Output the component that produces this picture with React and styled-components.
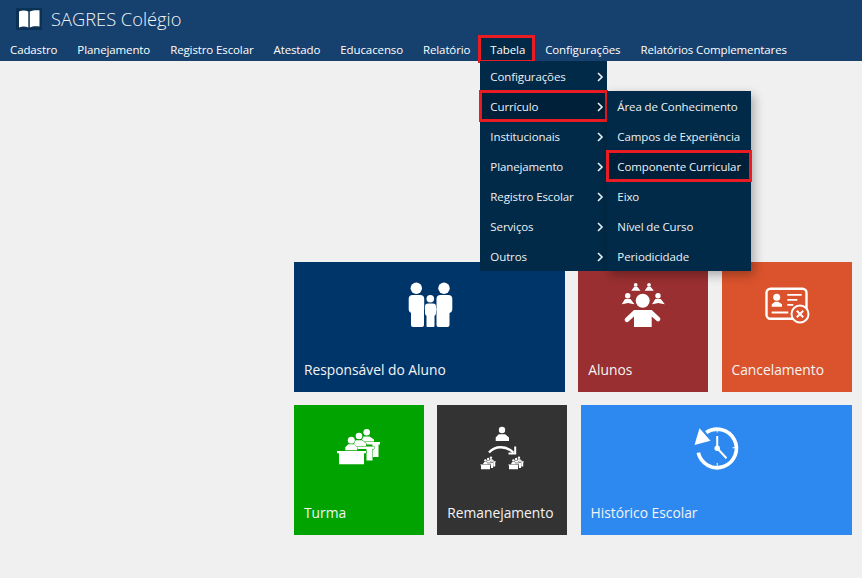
import styled, { createGlobalStyle } from "styled-components";

const GlobalStyle = createGlobalStyle`
  html, body { margin: 0; padding: 0; background: #f0f0f0; }
  body { font-family: "Open Sans", "Noto Sans", sans-serif; }
`;

const navItems = ["Cadastro", "Planejamento", "Registro Escolar", "Atestado", "Educacenso", "Relatório", "Tabela", "Configurações", "Relatórios Complementares"];
const tabelaItems = ["Configurações", "Currículo", "Institucionais", "Planejamento", "Registro Escolar", "Serviços", "Outros"];
const curriculoItems = ["Área de Conhecimento", "Campos de Experiência", "Componente Curricular", "Eixo", "Nível de Curso", "Periodicidade"];

const Chevron = () => (
  <ChevronIcon viewBox="0 0 8 10">
    <path d="M2 1l4 4-4 4" fill="none" stroke="currentColor" strokeWidth="1.6" />
  </ChevronIcon>
);

const BookLogo = () => (
  <LogoBox>
    <svg width="26" height="22" viewBox="0 0 26 22">
      <path d="M3 3.500C6 2 9.500 2 12.300 3.500V19.500C9.500 18 6 18 3 19.500Z" fill="#fff" />
      <path d="M23.500 2.300C20 2 16.500 2.300 13.800 3.500V19.500C16.500 18 20 18 23.500 18.500Z" fill="#fff" />
    </svg>
  </LogoBox>
);

const FamilyIcon = () => (
  <svg width="60" height="60" viewBox="0 0 60 60" fill="#fff">
    <circle cx="16.300" cy="11.300" r="5.700" />
    <circle cx="44" cy="11.300" r="5.700" />
    <circle cx="30.300" cy="21.700" r="3.800" />
    <rect x="8.700" y="18" width="15.500" height="18" rx="4" />
    <rect x="11" y="30" width="13" height="20" rx="2" />
    <rect x="36.500" y="18" width="15.800" height="18" rx="4" />
    <rect x="36.500" y="30" width="13" height="20" rx="2" />
    <rect x="25" y="26.500" width="11" height="12.500" rx="3" />
    <rect x="26.500" y="34" width="8" height="16" rx="1" />
  </svg>
);

const StudentsIcon = () => (
  <svg width="60" height="60" viewBox="0 0 60 60" fill="#fff">
    <circle cx="29.700" cy="23.700" r="7" />
    <path d="M21 33h17.700l8 7.500a2.300 2.300 0 0 1-3.200 3.300L38.700 39.500V50H21V39.500l-5.500 5a2.300 2.300 0 0 1-3.200-3.300Z" />
    <circle cx="14.700" cy="18.700" r="2.700" />
    <path d="M12 22h5.500l4 5.300-3-.5-3.500-.8-3.300.8-3 .5Z" />
    <circle cx="45" cy="18.700" r="2.700" />
    <path d="M42.300 22h5.500l4 5.300-3-.5-3.500-.8-3.300.8-3 .5Z" />
    <circle cx="22.700" cy="7.900" r="1.900" />
    <path d="M21 10h3.500l3 3.700h-9.200Z" />
    <circle cx="36" cy="7.900" r="1.900" />
    <path d="M34.300 10h3.500l3 3.700h-9.200Z" />
  </svg>
);

const CancelIcon = ({ color }) => (
  <svg width="60" height="60" viewBox="0 0 60 60" fill="#fff">
    <rect x="9.500" y="11.800" width="40" height="30" rx="4" fill="none" stroke="#fff" strokeWidth="2.400" />
    <circle cx="19.700" cy="20.300" r="3.500" />
    <path d="M14.700 29.700v-2.500l3.500-2.400h3l3.800 2.400v2.500Z" />
    <path d="M30.300 17h14.400v1.800H30.300ZM30.300 22h10v1.800h-10ZM30.300 27h6v1.800h-6ZM14.700 34.600h16.600v1.800H14.700Z" />
    <circle cx="43" cy="37" r="8.500" fill={color} stroke="#fff" strokeWidth="2" />
    <path d="M39.800 33.800l6.400 6.400M46.200 33.800l-6.400 6.400" stroke="#fff" strokeWidth="2" />
  </svg>
);

// three pupils behind their desks, back row first so each front desk cuts into the next
const Desks = ({ color }) => (
  <g fill="#fff" stroke={color} strokeWidth="1" paintOrder="stroke">
    <circle cx="37.700" cy="12.300" r="3.300" />
    <path d="M32 22l2.500-5.500h6l4.500 3v2.500Z" />
    <path d="M36 22h15v2.600h-1.500v12.400h-6V24.600H36Z" />
    <circle cx="30" cy="16" r="3.300" />
    <path d="M24 26l2.500-5.800h6.500l4 3V26Z" />
    <path d="M28 26.500h17v2.600h-1.500v11.400h-6V29.100H28Z" />
    <circle cx="22.300" cy="20.300" r="3.500" />
    <path d="M16.300 30.500v-3.200l3-3h6l3 3v3.200Z" />
    <path d="M8 31h29v2.300h-2V44.300H10V33.300H8Z" />
  </g>
);

const TurmaIcon = ({ color }) => (
  <svg width="60" height="60" viewBox="0 0 60 60">
    <Desks color={color} />
  </svg>
);

const MoveIcon = ({ color }) => (
  <svg width="60" height="60" viewBox="0 0 60 60" fill="#fff">
    <circle cx="30" cy="10" r="3.200" />
    <path d="M23.700 21v-3.500l3-3.200h6.500l3.800 3.200V21Z" />
    <path d="M17 32.500C23 25.500 34 25.500 41.500 32.500" fill="none" stroke="#fff" strokeWidth="2.300" />
    <path d="M36.500 33.500h6.700v-7" fill="none" stroke="#fff" strokeWidth="2" />
    <g transform="translate(5.400 33.300) scale(.36)"><Desks color={color} /></g>
    <g transform="translate(33.400 33.300) scale(.36)"><Desks color={color} /></g>
  </svg>
);

const HistoryIcon = () => (
  <svg width="60" height="60" viewBox="0 0 60 60" fill="#fff">
    <path d="M20.200 12.500A19.300 19.300 0 1 1 12.300 32.700" fill="none" stroke="#fff" strokeWidth="3.700" />
    <path d="M13.500 8.300 8.500 25 24.500 20.700Z" />
    <path d="M31.200 16v12.300l9.300 10" fill="none" stroke="#fff" strokeWidth="2" />
    <circle cx="31.200" cy="28.300" r="2.700" />
    <path d="M30.700 9.500h1v3h-1ZM30.700 43h1v3h-1ZM46.500 27.200h3v1h-3Z" />
  </svg>
);

const tiles = [
  [
    { label: "Responsável do Aluno", color: "#00356a", wide: true, icon: <FamilyIcon /> },
    { label: "Alunos", color: "#992f30", icon: <StudentsIcon /> },
    { label: "Cancelamento", color: "#da532c", icon: <CancelIcon color="#da532c" /> },
  ],
  [
    { label: "Turma", color: "#00a300", icon: <TurmaIcon color="#00a300" /> },
    { label: "Remanejamento", color: "#333333", icon: <MoveIcon color="#333333" /> },
    { label: "Histórico Escolar", color: "#2d89ef", wide: true, icon: <HistoryIcon /> },
  ],
];

export default function App() {
  return (
    <>
      <GlobalStyle />
      <Header>
        <TitleRow>
          <BookLogo />
          <Title>SAGRES Colégio</Title>
        </TitleRow>
        <Nav>
          {navItems.map((item) => (
            <NavItem key={item} $marked={item === "Tabela"}>
              {item}
              {item === "Tabela" && (
                <Menu>
                  {tabelaItems.map((sub) => (
                    <MenuItem key={sub} $marked={sub === "Currículo"}>
                      {sub}
                      <Chevron />
                      {sub === "Currículo" && (
                        <SubMenu>
                          {curriculoItems.map((leaf) => (
                            <MenuItem key={leaf} $marked={leaf === "Componente Curricular"}>
                              {leaf}
                            </MenuItem>
                          ))}
                        </SubMenu>
                      )}
                    </MenuItem>
                  ))}
                </Menu>
              )}
            </NavItem>
          ))}
        </Nav>
      </Header>
      <Board>
        {tiles.map((row, i) => (
          <TileRow key={i}>
            {row.map((tile) => (
              <Tile key={tile.label} $color={tile.color} $wide={tile.wide}>
                {tile.icon}
                <TileLabel>{tile.label}</TileLabel>
              </Tile>
            ))}
          </TileRow>
        ))}
      </Board>
    </>
  );
}

const Header = styled.header`
  background: #16406d;
  height: 61px;
  display: flex;
  flex-direction: column;
`;

const TitleRow = styled.div`
  height: 37px;
  display: flex;
  align-items: center;
  padding-left: 16px;
  gap: 9px;
`;

const LogoBox = styled.div`
  width: 26px;
  height: 22px;
  background: #0b3154;
  margin-top: 1px;
`;

const Title = styled.h1`
  margin: 0;
  color: #f2f5f8;
  font-size: 18.300px;
  font-weight: 300;
`;

const Nav = styled.nav`
  display: flex;
  height: 24px;
`;

const NavItem = styled.div`
  position: relative;
  height: 24px;
  padding: 0 ${(p) => (p.$marked ? "8px" : "10px")} 0 10px;
  margin-right: ${(p) => (p.$marked ? "2px" : "0")};
  color: #fff;
  font-size: 11.500px;
  letter-spacing: -0.115px;
  line-height: 26px;
  white-space: nowrap;
  background: ${(p) => (p.$marked ? "#002a47" : "transparent")};
  outline: ${(p) => (p.$marked ? "3.500px solid #e81c22" : "none")};
  outline-offset: -1.500px;
`;

const Menu = styled.div`
  position: absolute;
  top: 24px;
  left: 0;
  width: 127px;
  background: #002a47;
  z-index: 2;
`;

const SubMenu = styled.div`
  position: absolute;
  top: 0;
  left: 127px;
  width: 144px;
  background: #002a47;
  box-shadow: 3px 4px 10px rgba(0, 0, 0, 0.3);
  z-index: 3;
`;

const MenuItem = styled.div`
  position: relative;
  display: flex;
  align-items: center;
  justify-content: space-between;
  box-sizing: border-box;
  height: 30px;
  padding: 1px 3px 0 10px;
  color: #eef1f4;
  font-size: 11.500px;
  letter-spacing: -0.115px;
  white-space: nowrap;
  background: ${(p) => (p.$marked ? "#001f38" : "transparent")};
  ${(p) => p.$marked && "outline: 3.500px solid #e81c22; outline-offset: -2px; z-index: 1;"}
`;

const ChevronIcon = styled.svg`
  width: 8px;
  height: 10px;
  color: #eef1f4;
`;

const Board = styled.main`
  display: flex;
  flex-direction: column;
  gap: 13px;
  padding: 201px 0 0 294px;
`;

const TileRow = styled.div`
  display: flex;
  gap: 13.250px;
`;

const Tile = styled.div`
  width: ${(p) => (p.$wide ? "271px" : "130px")};
  height: 130px;
  background: ${(p) => p.$color};
  display: flex;
  flex-direction: column;
  align-items: center;
  padding-top: 15px;
  box-sizing: border-box;
`;

const TileLabel = styled.span`
  align-self: flex-start;
  margin: auto 0 13px 10px;
  color: #f4f4f4;
  font-size: 13.800px;
  font-weight: 500;
  white-space: nowrap;
`;
